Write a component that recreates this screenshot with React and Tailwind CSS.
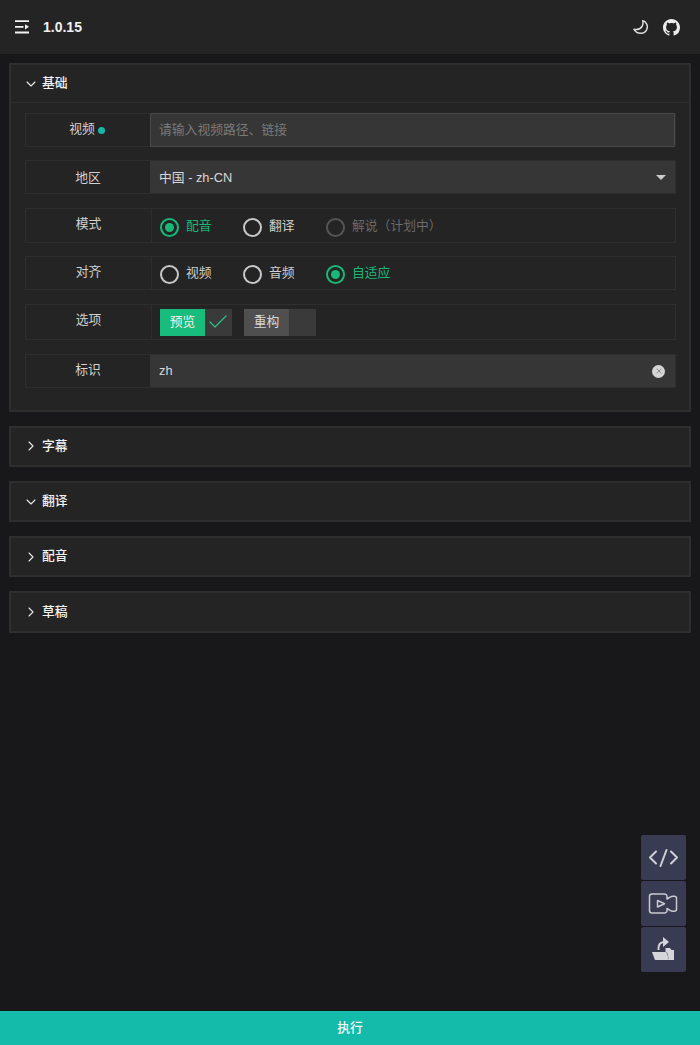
import React from 'react';
import { ChevronDown, ChevronRight, Check, X } from 'lucide-react';

const FONT = 'font-["Liberation_Sans","Noto_Sans_CJK_SC",sans-serif]';

const MenuIcon = () => (
  <svg width="16" height="14" viewBox="0 0 16 14" fill="none">
    <path d="M1 1.200h14M1 12.500h14M1 6.800h8.500" stroke="#f2f2f2" strokeWidth="1.800" />
    <path d="M11 4.200 15 6.800l-4 2.600z" fill="#f2f2f2" />
  </svg>
);

const MoonIcon = () => (
  <svg width="16" height="16" viewBox="0 0 16 16" fill="none">
    <path d="M9.700 1.700C13 2.500 14.800 6 14.200 9c-.7 3.500-3.700 5.500-6.700 5.300-2.500-.1-5-1.500-6.500-4 3.500.7 6.500-.3 8-2.800 1-2 1.300-4 .7-5.800z" stroke="#dcdcdc" strokeWidth="1.500" strokeLinejoin="round" />
  </svg>
);

const GithubIcon = () => (
  <svg width="17" height="17" viewBox="0 0 16 16" fill="#ececec">
    <path d="M8 0C3.580 0 0 3.580 0 8c0 3.540 2.290 6.530 5.470 7.590.4.070.55-.17.55-.38 0-.19-.01-.82-.01-1.490-2.010.37-2.530-.49-2.690-.94-.09-.23-.48-.94-.82-1.130-.28-.15-.68-.52-.01-.53.63-.01 1.080.58 1.230.82.720 1.210 1.870.87 2.330.66.070-.52.280-.87.510-1.070-1.780-.2-3.640-.89-3.640-3.950 0-.87.310-1.590.820-2.150-.08-.2-.36-1.020.08-2.120 0 0 .67-.21 2.200.82.640-.18 1.320-.27 2-.27s1.360.09 2 .27c1.530-1.040 2.200-.82 2.200-.82.440 1.100.160 1.920.080 2.120.51.560.82 1.270.82 2.150 0 3.070-1.870 3.750-3.650 3.950.290.250.540.730.540 1.480 0 1.070-.01 1.930-.01 2.200 0 .21.150.46.550.38A8.010 8.010 0 0 0 16 8c0-4.420-3.580-8-8-8z" />
  </svg>
);

const CodeIcon = () => (
  <svg width="45" height="45" viewBox="0 0 45 45" fill="none" stroke="#d0d1d6" strokeWidth="2" strokeLinecap="round" strokeLinejoin="round">
    <path d="M15 16.500 9 22.500l6 6M30 16.500l6 6-6 6M25.500 15l-6 16" />
  </svg>
);

const VideoIcon = () => (
  <svg width="45" height="45" viewBox="0 0 45 45" fill="none" stroke="#c9cad0" strokeWidth="1.500" strokeLinejoin="round">
    <path d="M11 13h12.500a2.500 2.500 0 0 1 2.500 2.500v2.500l3.500-2.200c1.500-.9 6-.9 6 1.200v11.500c0 2.100-4.500 2.100-6 1.200L26 27.500v2a2.500 2.500 0 0 1-2.500 2.500H11a2.500 2.500 0 0 1-2.500-2.500v-14A2.500 2.500 0 0 1 11 13z" />
    <path d="M16.500 19.500v6.500l7-3.200z" />
  </svg>
);

const FolderShareIcon = () => (
  <svg width="45" height="45" viewBox="0 0 45 45" fill="#d4d5da">
    <path d="M24.500 21h4.500l1.500 2H33v10h-5l-2-8h-1.500z" />
    <path d="M11 25h14.500l2.500 8H14z" />
    <path d="M17.500 23c-.5-5 1.500-8 5.500-8" fill="none" stroke="#d4d5da" strokeWidth="2" />
    <path d="M22 10 28 15l-6 5z" />
  </svg>
);

const Radio = ({ label, checked, disabled, className = '' }) => (
  <div className={`flex items-center gap-[7px] ${className}`}>
    <span
      className={`flex h-[19px] w-[19px] items-center justify-center rounded-full border-2 ${
        checked ? 'border-[#18b978]' : disabled ? 'border-[#555555]' : 'border-[#c8c8c8]'
      }`}
    >
      {checked && <span className="h-[9px] w-[9px] rounded-full bg-[#18b978]" />}
    </span>
    <span className={`mb-[2px] text-[12.8px] ${checked ? 'text-[#18b978]' : disabled ? 'text-[#6a6a6a]' : 'text-[#cfcfcf]'}`}>
      {label}
    </span>
  </div>
);

const Row = ({ label, dot, h, mb, labelPb = 'pb-[3px]', children, boxed }) => (
  <div className={`flex border border-[#2e2e2e] ${h} ${mb}`}>
    <div className={`flex shrink-0 items-center justify-center text-[12.8px] text-[#d2d2d2] ${boxed ? 'w-[125px]' : 'w-[124px]'} ${labelPb}`}>
      {label}
      {dot && <span className="ml-[3px] mr-[2px] mt-[3px] h-[7px] w-[7px] rounded-full bg-[#14b8a6]" />}
    </div>
    <div className={`flex min-w-0 flex-1 items-center ${boxed ? 'border-l border-[#2e2e2e] pl-[8px]' : ''}`}>
      {children}
    </div>
  </div>
);

const Tag = ({ label, on }) => (
  <div className="flex h-[27px] w-[72px] bg-[#3a3a3a]">
    <span className={`flex h-full w-[45px] items-center justify-center text-[12.8px] ${on ? 'bg-[#18bc7c] text-[#f0f0f0]' : 'bg-[#4f4f4f] text-[#d8d8d8]'}`}>
      {label}
    </span>
    {on && (
      <span className="flex flex-1 items-center justify-center pr-[2px]">
        <Check size={24} strokeWidth={1.200} color="#2fbf80" />
      </span>
    )}
  </div>
);

const SectionTitle = ({ title, open }) => (
  <>
    <span className="flex w-[16px] justify-center">
      {open
        ? <ChevronDown size={20} strokeWidth={1.600} color="#e8e8e8" />
        : <ChevronRight size={20} strokeWidth={1.600} color="#e8e8e8" />}
    </span>
    <span className="mb-[2px] ml-[3px] text-[12.8px] font-medium text-[#f2f2f2]">{title}</span>
  </>
);

const Section = ({ title, open }) => (
  <div className="mb-[14px] flex h-[41.3px] items-center border-2 border-[#2e2e2e] bg-[#242424] pl-[12px]">
    <SectionTitle title={title} open={open} />
  </div>
);

const FloatButton = ({ children }) => (
  <button className="flex h-[45px] w-[45px] items-center justify-center rounded-[2px] bg-[#383b52]">
    {children}
  </button>
);

export default function App() {
  return (
    <div className={`relative flex h-screen flex-col overflow-hidden bg-[#18181b] ${FONT}`}>
      {/* top bar */}
      <header className="flex h-[54px] shrink-0 items-center justify-between bg-[#242424] pl-[14px] pr-[20px]">
        <div className="flex items-center gap-[13px]">
          <MenuIcon />
          <span className="text-[14px] font-semibold text-[#f0f0f0]">1.0.15</span>
        </div>
        <div className="flex items-center gap-[14px]">
          <MoonIcon />
          <GithubIcon />
        </div>
      </header>

      <main className="flex-1 px-[9px] pt-[9px]">
        {/* basic */}
        <div className="mb-[13.6px] border-2 border-[#2e2e2e] bg-[#242424]">
          <div className="flex h-[38px] items-center border-b border-[#2e2e2e] pl-[12px]">
            <SectionTitle title="基础" open />
          </div>
          <div className="pb-[22px] pl-[14px] pr-[13px] pt-[10px]">
            <Row label="视频" dot h="h-[34px]" mb="mb-[13px]">
              <input
                readOnly
                placeholder="请输入视频路径、链接"
                className="-my-[1px] h-[34px] w-full rounded-[1px] border border-[#4a4a4a] bg-[#363636] px-[8px] pb-[2px] text-[12.8px] outline-none placeholder:text-[#7a7a7a]"
              />
            </Row>
            <Row label="地区" h="h-[34px]" mb="mb-[14px]" labelPb="pt-[1px]">
              <div className="flex h-full w-full items-center justify-between bg-[#363636] pl-[9px] pr-[9px] pt-[1px] text-[12.8px] text-[#d8d8d8]">
                <span>中国 - zh-CN</span>
                <span className="h-0 w-0 border-x-[5px] border-t-[5px] border-x-transparent border-t-[#cccccc]" />
              </div>
            </Row>
            <Row label="模式" boxed h="h-[35px]" mb="mb-[13px]">
              <div className="flex pt-[3px]">
                <Radio label="配音" checked className="w-[83px]" />
                <Radio label="翻译" className="w-[83px]" />
                <Radio label="解说（计划中）" disabled />
              </div>
            </Row>
            <Row label="对齐" boxed h="h-[34px]" mb="mb-[14px]">
              <div className="flex pt-[2px]">
                <Radio label="视频" className="w-[83px]" />
                <Radio label="音频" className="w-[83px]" />
                <Radio label="自适应" checked />
              </div>
            </Row>
            <Row label="选项" boxed h="h-[36px]" mb="mb-[14px]" labelPb="pb-[4px]">
              <div className="flex gap-[12px]">
                <Tag label="预览" on />
                <Tag label="重构" />
              </div>
            </Row>
            <Row label="标识" h="h-[34px]">
              <div className="flex h-full w-full items-center justify-between bg-[#363636] pl-[9px] pr-[10px] text-[12.8px] text-[#d8d8d8]">
                <span>zh</span>
                <span className="flex h-[13px] w-[13px] items-center justify-center rounded-full bg-[#d4d4d4]">
                  <X size={8} strokeWidth={2} color="#666666" />
                </span>
              </div>
            </Row>
          </div>
        </div>

        <Section title="字幕" />
        <Section title="翻译" open />
        <Section title="配音" />
        <Section title="草稿" />
      </main>

      {/* floating actions */}
      <div className="absolute bottom-[73px] right-[14px] flex flex-col gap-[1px]">
        <FloatButton><CodeIcon /></FloatButton>
        <FloatButton><VideoIcon /></FloatButton>
        <FloatButton><FolderShareIcon /></FloatButton>
      </div>

      <button className="h-[34px] shrink-0 bg-[#14bbaa] text-[12.8px] font-medium text-[#f5f5f5]">执行</button>
    </div>
  );
}
